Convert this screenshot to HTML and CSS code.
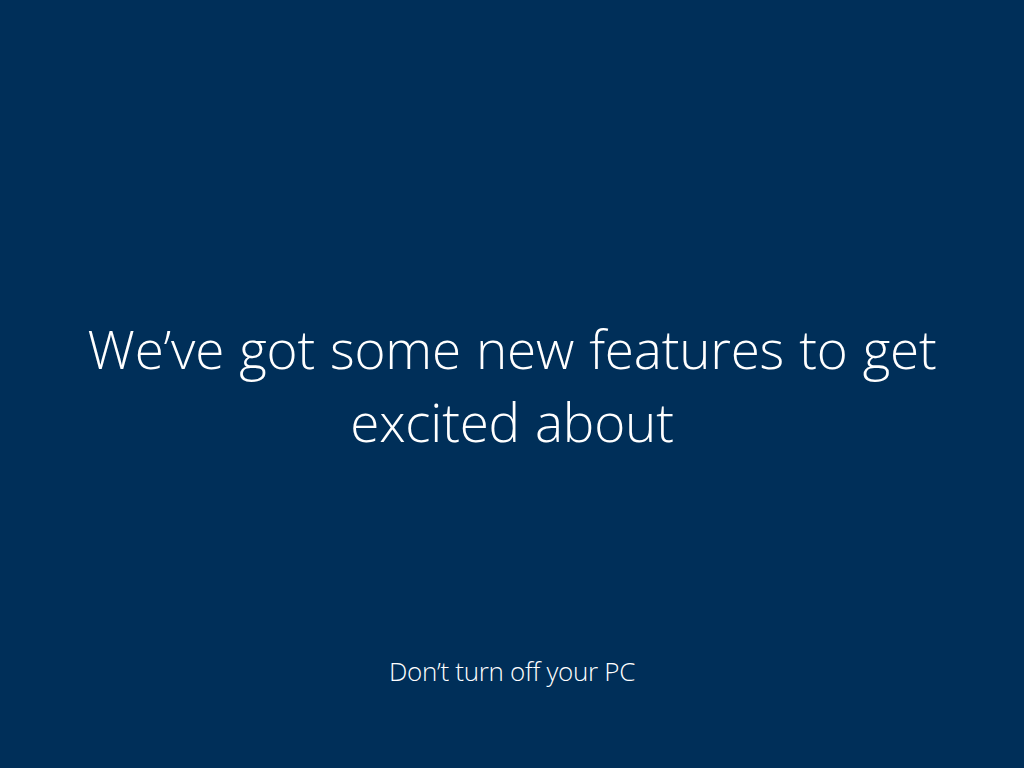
FILE: index.html
```html
<!DOCTYPE html>
<html lang="en">
<head>
<meta charset="utf-8">
<title>Update</title>
<link rel="stylesheet" href="styles.css">
</head>
<body>
<main class="screen">
  <div class="message">
    <h1 class="headline">We’ve got some new features to get excited about</h1>
  </div>
  <p class="footer">Don’t turn off your PC</p>
</main>
</body>
</html>
```
FILE: styles.css
```css
html, body {
  margin: 0;
  padding: 0;
  height: 100%;
  background: #002f59;
}
.screen {
  height: 768px;
  display: flex;
  flex-direction: column;
  align-items: center;
  color: #ffffff;
  font-family: "Open Sans", "Noto Sans", sans-serif;
  font-weight: 300;
}
.message {
  padding-top: 312px;
  width: 900px;
  text-align: center;
}
.headline {
  margin: 0;
  font-weight: 300;
  font-size: 53px;
  line-height: 73px;
  letter-spacing: -0.2px;
  word-spacing: 1.5px;
}
.footer {
  margin: auto 0 0 0;
  padding-bottom: 81px;
  font-size: 26px;
  line-height: 32px;
  letter-spacing: -0.3px;
}
```
